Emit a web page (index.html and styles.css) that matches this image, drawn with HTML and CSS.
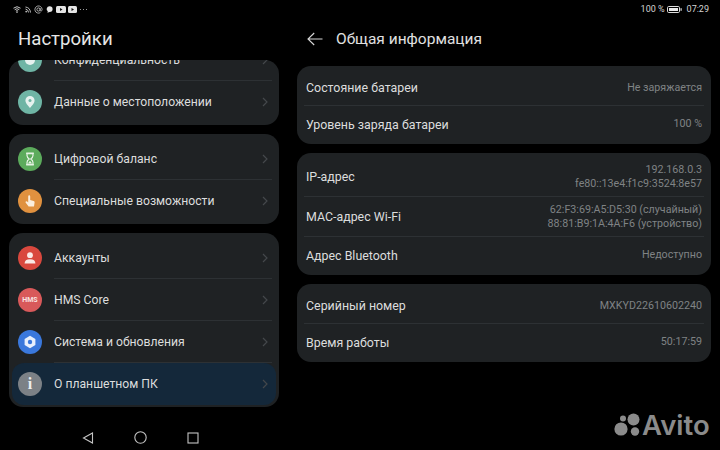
FILE: index.html
```html
<!DOCTYPE html>
<html lang="ru">
<head>
    <meta charset="UTF-8">
    <title>Настройки</title>
    <link rel="stylesheet" href="styles.css">
</head>
<body>
    <div class="statusbar">
        <div class="status-icons">
            <svg width="8" height="7" viewBox="0 0 8 7"><path d="M0.5 2.2Q4-0.8 7.5 2.2M1.7 3.7Q4 1.7 6.3 3.7M2.9 5.1Q4 4.2 5.1 5.1" fill="none" stroke="#ddd" stroke-width="0.9"/><circle cx="4" cy="6.2" r="0.7" fill="#ddd"/></svg>
            <svg class="gap-feed" width="6" height="7" viewBox="0 0 6 7"><path d="M0.5 1Q5 1.5 5.5 6.5M0.5 3Q3.2 3.5 3.6 6.5" fill="none" stroke="#bbb" stroke-width="1"/><circle cx="1.2" cy="5.6" r="0.9" fill="#bbb"/></svg>
            <svg class="gap-at" width="9" height="9" viewBox="0 0 9 9"><circle cx="4.5" cy="4.5" r="1.6" fill="none" stroke="#ccc" stroke-width="0.8"/><path d="M6.1 3V5.2Q6.2 6.2 7.1 6.1Q8.2 5.9 8.1 4.3A3.6 3.6 0 1 0 6.4 7.6" fill="none" stroke="#ccc" stroke-width="0.8"/></svg>
            <svg class="gap-chat" width="7" height="7" viewBox="0 0 7 7"><path d="M3.5 0.3A3 2.8 0 0 1 3.6 6L1.4 6.8L1.8 5.3A3 2.8 0 0 1 3.5 0.3Z" fill="#e4e4e4"/></svg>
            <svg class="gap-video" width="10" height="7" viewBox="0 0 10 7"><rect width="10" height="7" rx="1.5" fill="#e4e4e4"/><path d="M4 2L6.5 3.5L4 5Z" fill="#111"/></svg>
            <svg class="gap-video2" width="9" height="7" viewBox="0 0 9 7"><rect width="9" height="7" rx="1.5" fill="#e4e4e4"/><path d="M3.5 2L6 3.5L3.5 5Z" fill="#111"/></svg>
            <span class="status-more"></span>
        </div>
        <div class="status-right">
            <span>100 %</span>
            <svg class="battery" width="15" height="7" viewBox="0 0 15 7"><rect x="0.5" y="0.5" width="12" height="6" rx="1.2" fill="none" stroke="#ddd"/><rect x="2" y="2" width="9" height="3" fill="#e8e8e8"/><rect x="13.5" y="2.2" width="1.2" height="2.6" fill="#ddd"/></svg>
            <span class="status-time">07:29</span>
        </div>
    </div>

    <div class="panes">
        <div class="left-pane">
            <h1 class="left-title">Настройки</h1>
            <div class="settings-scroll">
                <div class="settings-list">
                    <div class="card">
                        <div class="row">
                            <span class="icon icon-teal"><svg width="14" height="14" viewBox="0 0 14 14"><circle cx="7" cy="7" r="5" fill="#e6f2ef"/></svg></span>
                            <div class="row-body"><span>Конфиденциальность</span><svg class="chevron" width="6" height="10" viewBox="0 0 6 10"><path d="M1 1L5 5L1 9"/></svg></div>
                        </div>
                        <div class="row">
                            <span class="icon icon-teal"><svg width="14" height="14" viewBox="0 0 14 14"><path d="M7 1A4.6 4.6 0 0 0 2.4 5.6C2.4 8.6 7 13 7 13S11.6 8.6 11.6 5.6A4.6 4.6 0 0 0 7 1Z" fill="#e6f2ef"/><circle cx="7" cy="5.6" r="1.5" fill="#6fb5a5"/></svg></span>
                            <div class="row-body row-body-last"><span>Данные о местоположении</span><svg class="chevron" width="6" height="10" viewBox="0 0 6 10"><path d="M1 1L5 5L1 9"/></svg></div>
                        </div>
                    </div>

                    <div class="card">
                        <div class="row">
                            <span class="icon icon-green"><svg width="14" height="14" viewBox="0 0 14 14"><path d="M3.2 1.2H10.8M3.2 12.8H10.8" stroke="#e6f2e4" stroke-width="1.4"/><path d="M4 1.6H10V3.6Q10 5.4 7.8 7Q10 8.6 10 10.4V12.4H4V10.4Q4 8.6 6.2 7Q4 5.4 4 3.6Z" fill="none" stroke="#e6f2e4" stroke-width="1.2"/><path d="M5.2 11.6Q5.6 9.6 7 9Q8.4 9.6 8.8 11.6Z" fill="#e6f2e4"/></svg></span>
                            <div class="row-body"><span>Цифровой баланс</span><svg class="chevron" width="6" height="10" viewBox="0 0 6 10"><path d="M1 1L5 5L1 9"/></svg></div>
                        </div>
                        <div class="row">
                            <span class="icon icon-orange"><svg width="16" height="16" viewBox="0 0 16 16"><path d="M6.2 3.4Q6.2 2.2 7.2 2.2Q8.2 2.2 8.2 3.4V7L11.6 7.9Q12.8 8.3 12.6 9.6L12 13.6H6.6L3.6 9.6Q3.2 8.8 3.9 8.4Q4.6 8 5.2 8.6L6.2 9.6Z" fill="#fbeedd"/></svg></span>
                            <div class="row-body row-body-last"><span>Специальные возможности</span><svg class="chevron" width="6" height="10" viewBox="0 0 6 10"><path d="M1 1L5 5L1 9"/></svg></div>
                        </div>
                    </div>

                    <div class="card">
                        <div class="row">
                            <span class="icon icon-red"><svg width="14" height="14" viewBox="0 0 14 14"><circle cx="7" cy="4.2" r="2.9" fill="#fbe9e6"/><path d="M1.6 12.6Q1.6 8.2 7 8.2Q12.4 8.2 12.4 12.6Z" fill="#fbe9e6"/></svg></span>
                            <div class="row-body"><span>Аккаунты</span><svg class="chevron" width="6" height="10" viewBox="0 0 6 10"><path d="M1 1L5 5L1 9"/></svg></div>
                        </div>
                        <div class="row">
                            <span class="icon icon-hms">HMS</span>
                            <div class="row-body"><span>HMS Core</span><svg class="chevron" width="6" height="10" viewBox="0 0 6 10"><path d="M1 1L5 5L1 9"/></svg></div>
                        </div>
                        <div class="row">
                            <span class="icon icon-blue"><svg width="14" height="14" viewBox="0 0 14 14"><path d="M7 0.8L12.4 3.9V10.1L7 13.2L1.6 10.1V3.9Z" fill="#e8f0fd"/><circle cx="7" cy="7" r="2.2" fill="#3a78dc"/></svg></span>
                            <div class="row-body"><span>Система и обновления</span><svg class="chevron" width="6" height="10" viewBox="0 0 6 10"><path d="M1 1L5 5L1 9"/></svg></div>
                        </div>
                        <div class="row row-selected">
                            <span class="icon icon-gray">i</span>
                            <div class="row-body row-body-last"><span>О планшетном ПК</span><svg class="chevron" width="6" height="10" viewBox="0 0 6 10"><path d="M1 1L5 5L1 9"/></svg></div>
                        </div>
                    </div>
                </div>
            </div>
            <div class="navbar">
                <svg width="12" height="12" viewBox="0 0 12 12"><path d="M10.5 1V11L1.5 6Z"/></svg>
                <svg width="13" height="13" viewBox="0 0 13 13"><circle cx="6.5" cy="6.5" r="5.7"/></svg>
                <svg width="12" height="12" viewBox="0 0 12 12"><rect x="1" y="1" width="10" height="10"/></svg>
            </div>
        </div>

        <div class="right-pane">
            <div class="right-header">
                <svg width="16" height="14" viewBox="0 0 16 14"><path d="M15.5 7H1M7.2 1L1 7L7.2 13" fill="none" stroke="#d8d8d8" stroke-width="1.1"/></svg>
                <h2 class="right-title">Общая информация</h2>
            </div>

            <div class="card">
                <div class="info-row"><span>Состояние батареи</span><span class="info-value">Не заряжается</span></div>
                <div class="info-row"><span>Уровень заряда батареи</span><span class="info-value">100 %</span></div>
            </div>

            <div class="card">
                <div class="info-row info-row-tall"><span>IP-адрес</span><span class="info-value">192.168.0.3<br>fe80::13e4:f1c9:3524:8e57</span></div>
                <div class="info-row info-row-tall"><span>MAC-адрес Wi-Fi</span><span class="info-value">62:F3:69:A5:D5:30 (случайный)<br>88:81:B9:1A:4A:F6 (устройство)</span></div>
                <div class="info-row"><span>Адрес Bluetooth</span><span class="info-value">Недоступно</span></div>
            </div>

            <div class="card">
                <div class="info-row"><span>Серийный номер</span><span class="info-value">MXKYD22610602240</span></div>
                <div class="info-row"><span>Время работы</span><span class="info-value">50:17:59</span></div>
            </div>
        </div>
    </div>

    <!-- Watermark -->
    <div class="watermark">
        <svg width="27" height="24" viewBox="0 0 27 24"><circle cx="7" cy="16" r="6.6"/><circle cx="9" cy="5.5" r="3"/><circle cx="19.5" cy="6.5" r="6"/><circle cx="21" cy="18.5" r="4.2"/></svg>
        <span>Avito</span>
    </div>
</body>
</html>
```

FILE: styles.css
```css
* {
    margin: 0;
    padding: 0;
    box-sizing: border-box;
    font-family: Roboto, Arial, sans-serif;
}

body {
    width: 720px;
    height: 450px;
    background: #000;
    color: #dcdddd;
    overflow: hidden;
    position: relative;
}

/* Status bar */
.statusbar {
    height: 16px;
    padding: 2px 11px 0 13px;
    display: flex;
    justify-content: space-between;
    align-items: center;
}

.status-icons {
    display: flex;
    align-items: center;
}

.gap-feed { margin-left: 4px; }
.gap-at { margin-left: 3px; }
.gap-chat { margin-left: 3px; }
.gap-video { margin-left: 3px; }
.gap-video2 { margin-left: 2px; }

.status-more {
    width: 7px;
    height: 1px;
    margin-left: 3px;
    background: repeating-linear-gradient(90deg, #999 0 1px, transparent 1px 3px);
}

.status-right {
    display: flex;
    align-items: center;
    font-size: 9px;
    color: #d4d4d4;
}

.battery {
    margin-left: 2px;
}

.status-time {
    margin-left: 5px;
}

.panes {
    display: flex;
}

/* Left pane */
.left-pane {
    width: 288px;
    padding: 0 9px;
}

.left-title {
    height: 44px;
    padding: 9px 0 0 9px;
    font-size: 18.6px;
    line-height: 28px;
    font-weight: 400;
    color: #e6e6e6;
}

.settings-scroll {
    height: 347px;
    overflow: hidden;
    border-radius: 14px 14px 0 0;
}

.settings-list {
    margin-top: -25px;
    display: flex;
    flex-direction: column;
    gap: 9px;
}

.card {
    background: #1f2224;
    border-radius: 14px;
    padding: 4px 0 2px;
}

.row {
    height: 42px;
    padding-left: 9px;
    display: flex;
    align-items: center;
    gap: 12px;
    font-size: 12.2px;
}

.row-selected {
    margin: 0 3px;
    padding-left: 6px;
    background: #14283a;
    border-radius: 12px;
}

.row-body {
    flex: 1;
    height: 100%;
    margin-right: 7px;
    padding-right: 4px;
    display: flex;
    justify-content: space-between;
    align-items: center;
    border-bottom: 1px solid #2d3134;
}

.row-body-last {
    border-bottom: none;
}

.row-selected .row-body {
    margin-right: 4px;
}

.chevron {
    fill: none;
    stroke: #44484b;
    stroke-width: 1.2;
}

.icon {
    width: 24px;
    height: 24px;
    flex-shrink: 0;
    border-radius: 50%;
    display: flex;
    align-items: center;
    justify-content: center;
}

.icon-teal { background: #6fb5a5; }
.icon-green { background: #5cab5c; }
.icon-orange { background: #e0913f; }
.icon-red { background: #d9483e; }
.icon-blue { background: #3a78dc; }

.icon-hms {
    background: #d8595a;
    color: #f8e4e2;
    font-size: 7px;
    font-weight: 700;
}

.icon-gray {
    background: #7c8186;
    color: #eee;
    font-family: 'Liberation Serif', serif;
    font-size: 16px;
    font-weight: 700;
}

/* Navigation bar */
.navbar {
    height: 43px;
    padding: 18px 0 0 73px;
    display: flex;
    align-items: center;
    gap: 40px;
}

.navbar svg {
    fill: none;
    stroke: #c4c4c4;
    stroke-width: 1.1;
}

/* Right pane */
.right-pane {
    flex: 1;
    margin-left: 9px;
    padding-right: 9px;
    display: flex;
    flex-direction: column;
    gap: 9px;
}

.right-header {
    height: 41px;
    padding: 5px 0 0 10px;
    display: flex;
    align-items: center;
    gap: 13px;
}

.right-title {
    font-size: 15.5px;
    font-weight: 400;
    color: #e0e0e0;
}

.info-row {
    height: 36px;
    margin: 0 7px;
    padding: 0 2px;
    display: flex;
    justify-content: space-between;
    align-items: center;
    font-size: 12.4px;
    border-bottom: 1px solid #2d3134;
}

.info-row:last-child {
    border-bottom: none;
}

.info-row-tall {
    height: 40px;
}

.info-value {
    font-size: 10.7px;
    line-height: 14px;
    text-align: right;
    color: #7f8384;
}

/* Watermark */
.watermark {
    position: absolute;
    left: 614px;
    top: 412px;
    display: flex;
    align-items: center;
    gap: 1px;
    color: #8b8b8b;
    fill: #8b8b8b;
}

.watermark span {
    font-family: Inter, Arial, sans-serif;
    font-size: 27.5px;
    line-height: 26px;
    font-weight: 600;
}
```
